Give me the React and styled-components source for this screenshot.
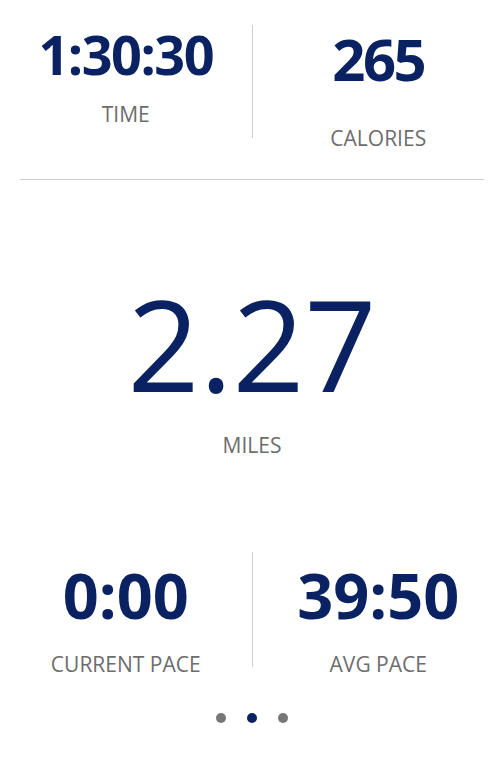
import React from "react";
import styled, { createGlobalStyle } from "styled-components";

const Global = createGlobalStyle`
  html, body { margin: 0; padding: 0; background: #ffffff; }
  body { font-family: "Open Sans", "Noto Sans", sans-serif; }
`;

const NAVY = "#0b2262";
const GRAY = "#6d6d6d";
const LINE = "#cdcdcd";

const Page = styled.div`
  width: 504px;
  height: 759px;
  display: flex;
  flex-direction: column;
  background: #fff;
  overflow: hidden;
`;

const SplitRow = styled.div`
  display: grid;
  grid-template-columns: 1fr 1px 1fr;
  align-items: start;
  height: ${(p) => p.$height}px;
`;

const VDivider = styled.div`
  width: 1px;
  background: ${LINE};
  margin-top: ${(p) => p.$top}px;
  height: ${(p) => p.$height}px;
`;

const Cell = styled.div`
  display: flex;
  flex-direction: column;
  align-items: center;
  padding-top: ${(p) => p.$top}px;
`;

const Value = styled.div`
  color: ${NAVY};
  font-weight: ${(p) => p.$weight || 700};
  font-size: ${(p) => p.$size}px;
  letter-spacing: ${(p) => p.$ls || 0}px;
  line-height: 1;
  white-space: nowrap;
`;

const Label = styled.div`
  color: ${GRAY};
  font-size: 21px;
  line-height: 1;
  margin-top: ${(p) => p.$gap}px;
  white-space: nowrap;
`;

const HRule = styled.div`
  height: 1px;
  background: ${LINE};
  margin: 0 20px;
`;

const Hero = styled.div`
  display: flex;
  flex-direction: column;
  align-items: center;
  padding-top: 100px;
  height: 372px;
  box-sizing: border-box;
`;

const Dots = styled.div`
  display: flex;
  justify-content: center;
  gap: 21px;
`;

const Dot = styled.span`
  width: 10px;
  height: 10px;
  border-radius: 50%;
  background: ${(p) => (p.$active ? NAVY : "#767676")};
`;

export default function App() {
  return (
    <>
      <Global />
      <Page>
        <SplitRow $height={179}>
          <Cell $top={27}>
            <Value $size={54} $ls={-1.5}>1:30:30</Value>
            <Label $gap={23}>TIME</Label>
          </Cell>
          <VDivider $top={25} $height={113} />
          <Cell $top={30}>
            <Value $size={58} $ls={-2.5}>265</Value>
            <Label $gap={40}>CALORIES</Label>
          </Cell>
        </SplitRow>
        <HRule />
        <Hero>
          <Value $size={126} $weight={500}>2.27</Value>
          <Label $gap={29}>MILES</Label>
        </Hero>
        <SplitRow $height={161}>
          <Cell $top={11}>
            <Value $size={63}>0:00</Value>
            <Label $gap={28}>CURRENT PACE</Label>
          </Cell>
          <VDivider $top={0} $height={115} />
          <Cell $top={11}>
            <Value $size={63}>39:50</Value>
            <Label $gap={28}>AVG PACE</Label>
          </Cell>
        </SplitRow>
        <Dots>
          <Dot />
          <Dot $active />
          <Dot />
        </Dots>
      </Page>
    </>
  );
}
